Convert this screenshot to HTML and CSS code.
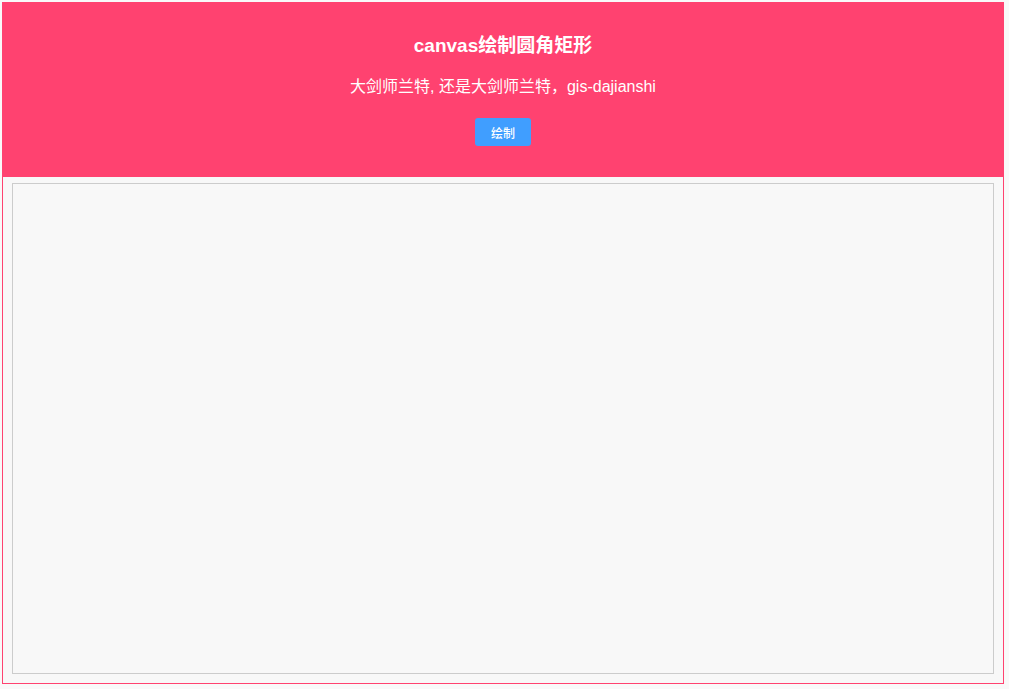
FILE: index.html
```html
<!DOCTYPE html>
<html lang="zh">
<head>
<meta charset="utf-8">
<title>canvas绘制圆角矩形</title>
<link rel="stylesheet" href="styles.css">
</head>
<body>
<div class="app">
  <header class="header">
    <h3 class="title">canvas绘制圆角矩形</h3>
    <p class="subtitle">大剑师兰特, 还是大剑师兰特，gis-dajianshi</p>
    <button class="btn">绘制</button>
  </header>
  <div class="stage">
    <canvas class="board" width="980" height="490"></canvas>
  </div>
</div>
</body>
</html>
```
FILE: styles.css
```css
html, body {
  margin: 0;
  padding: 0;
  background: #f9f9f9;
}
body {
  padding: 2px 5px 5px 2px;
  font-family: "Liberation Sans", "Noto Sans CJK SC", sans-serif;
}
.app {
  width: 1000px;
  height: 681px;
  border: 1px solid #ff4270;
  border-top: none;
  background: #f8f8f8;
  display: flex;
  flex-direction: column;
}
.header {
  height: 175px;
  box-sizing: border-box;
  margin: 0 -1px;
  background: #ff4270;
  color: #fff;
  display: flex;
  flex-direction: column;
  align-items: center;
  padding-top: 33px;
}
.title {
  margin: 0;
  font-size: 19px;
  font-weight: bold;
  line-height: 22px;
}
.subtitle {
  margin: 20px 0 0;
  font-size: 16px;
  line-height: 20px;
}
.btn {
  margin-top: 21px;
  width: 56px;
  height: 28px;
  border: none;
  border-radius: 3px;
  background: #409eff;
  color: #fff;
  font-family: "Noto Sans CJK SC", sans-serif;
  font-size: 12px;
  font-weight: 500;
  padding: 0;
}
.stage {
  flex: 1;
  padding: 6px 9px 8px;
}
.board {
  display: block;
  width: 980px;
  height: 489px;
  border: 1px solid #cccccc;
  background: #f8f8f8;
}
```
